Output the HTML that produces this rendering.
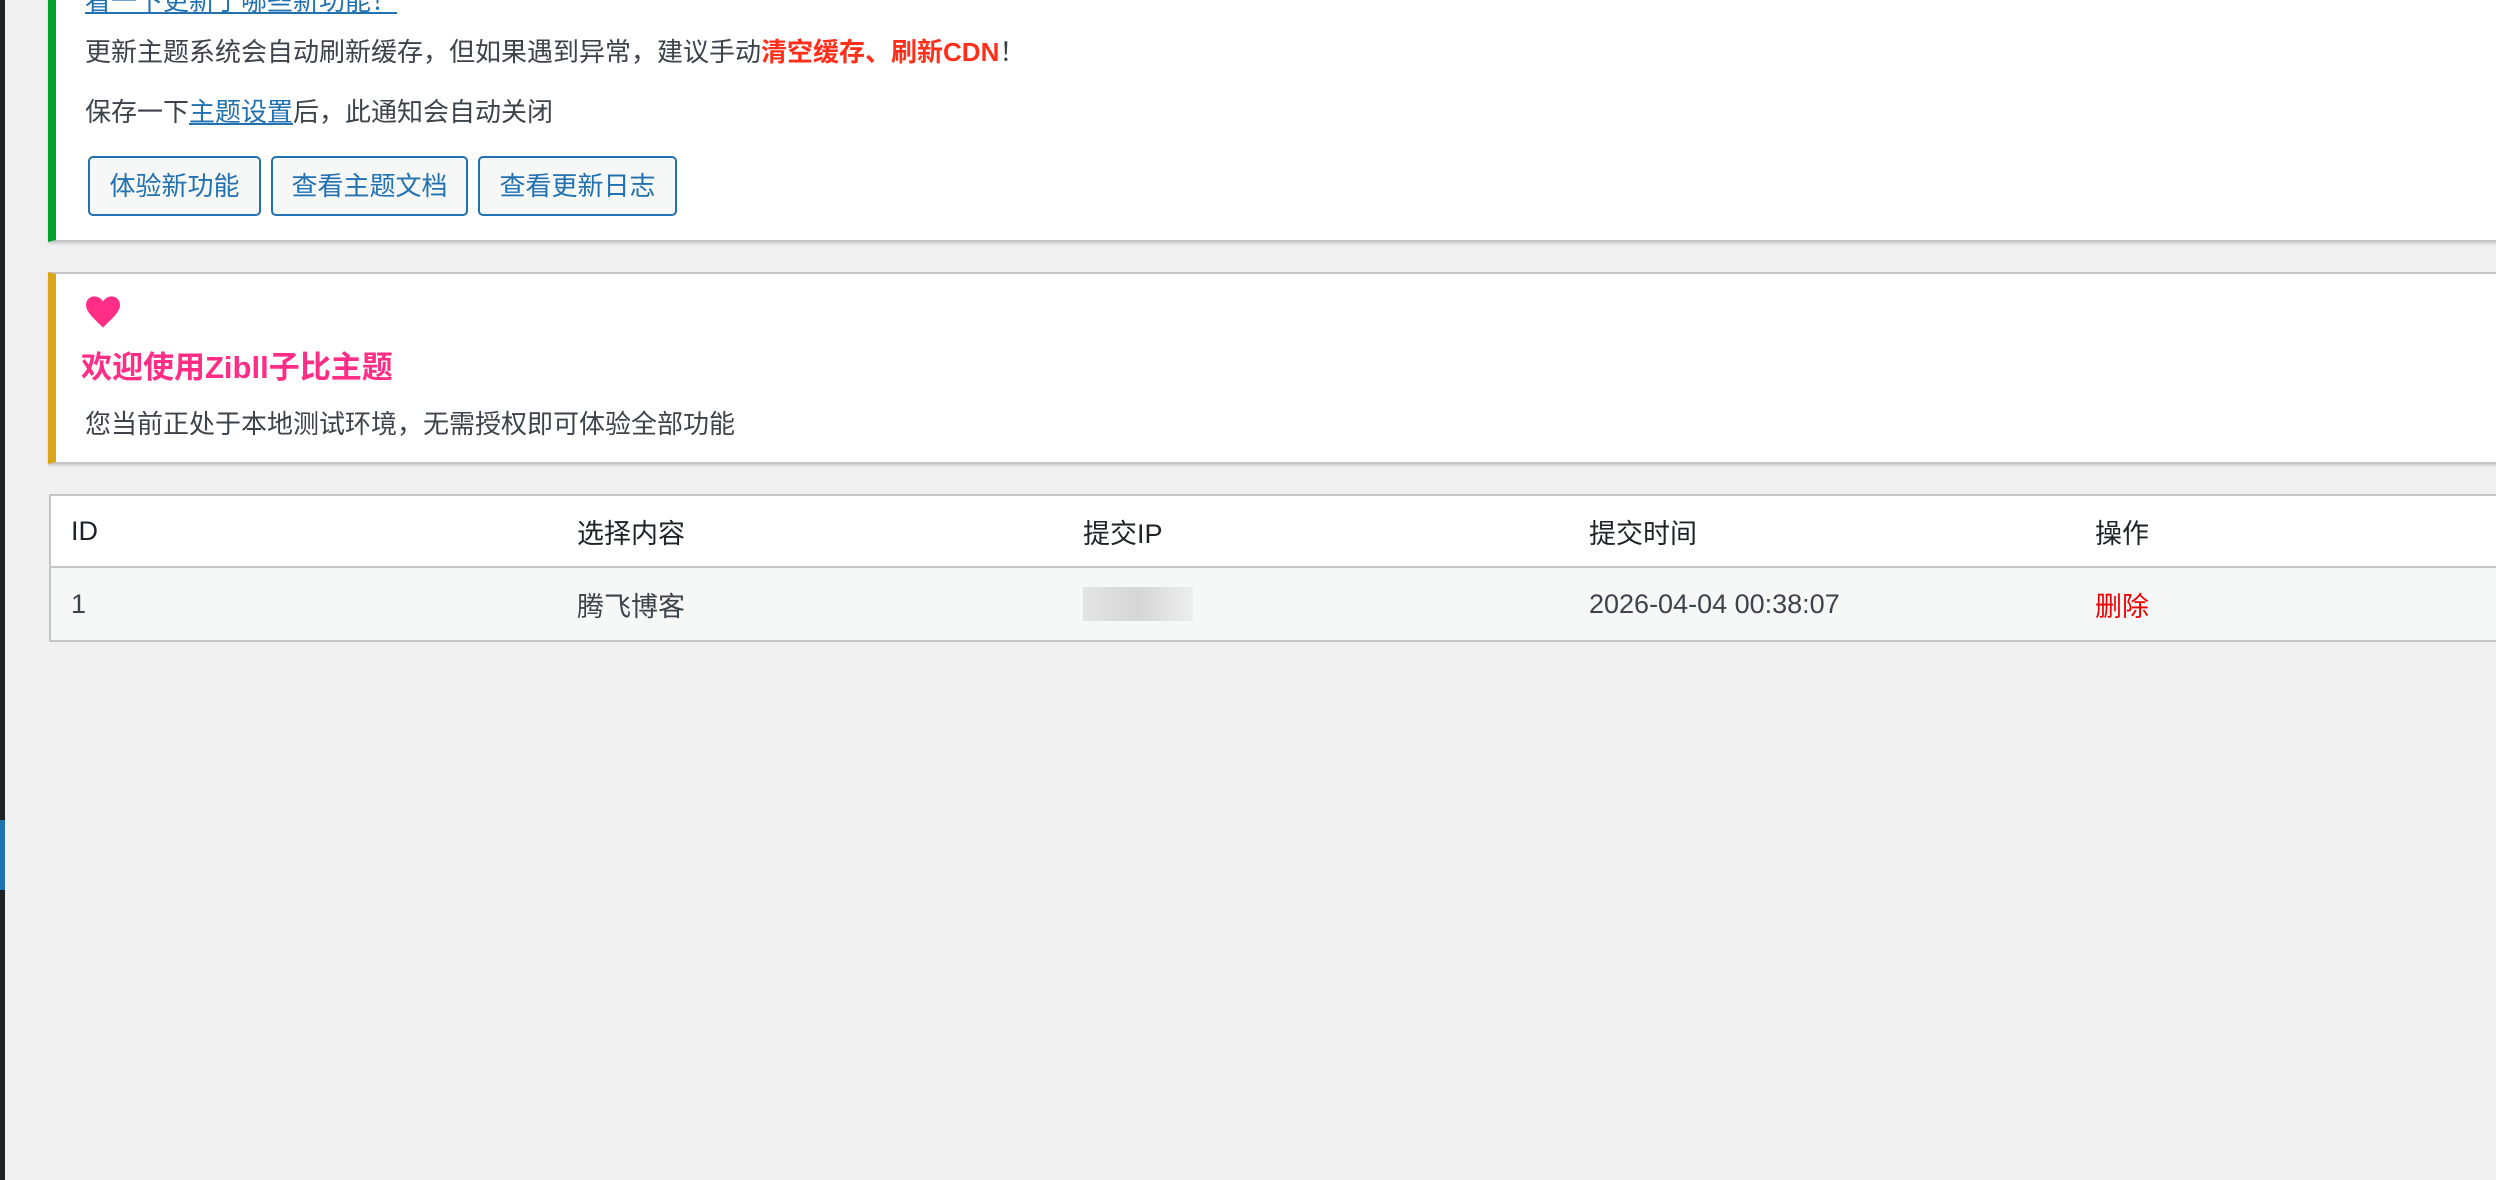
<!DOCTYPE html>
<html><head><meta charset="utf-8"><style>
body{margin:0;width:2496px;height:1180px;background:#f0f0f1;font-family:"Liberation Sans","Noto Sans CJK SC",sans-serif;color:#3c434a;position:relative;overflow:hidden;font-size:26px}
.strip{position:absolute;left:0;top:0;width:5px;height:1180px;background:#1d2327}
.strip2{position:absolute;left:0;top:820px;width:5px;height:70px;background:#2271b1}
.n{position:absolute;left:48px;right:0;background:#fff;box-shadow:0 2px 2px rgba(0,0,0,.12);border-left:8px solid}
.n1{top:-10px;height:250px;border-left-color:#00a32a;border-bottom:2px solid #c3c4c7}
.n2{top:272px;height:188px;border-left-color:#dba617;border-top:2px solid #c3c4c7;border-bottom:2px solid #c3c4c7}
.t{position:absolute;white-space:nowrap;line-height:1}
a{color:#2271b1;text-decoration:underline}
.btn{position:absolute;height:56px;border:2px solid #2271b1;border-radius:5px;background:#f6f7f7;color:#2271b1;font-size:26px;line-height:56px;text-align:center;box-sizing:content-box}
table{position:absolute;left:49px;top:494px;width:2460px;border-collapse:collapse;border:2px solid #c3c4c7;background:#fff;table-layout:fixed}
td{width:486px;padding:0 0 0 20px;height:70px;font-size:27px;color:#3c434a;text-align:left;vertical-align:middle}
tr.h td{height:70px;border-bottom:2px solid #c3c4c7;color:#1d2327}
tr.r td{background:#f6f7f7;height:72px}
</style></head><body>
<div class="strip"></div><div class="strip2"></div>
<div class="n n1">
 <div class="t" style="left:29px;top:-2px;color:#2271b1;text-decoration:underline">看一下更新了哪些新功能！</div>
 <div class="t" style="left:29px;top:49px">更新主题系统会自动刷新缓存，但如果遇到异常，建议手动<b style="color:#ff2f1a">清空缓存、刷新CDN</b>！</div>
 <div class="t" style="left:29px;top:109px">保存一下<a>主题设置</a>后，此通知会自动关闭</div>
 <div class="btn" style="left:32px;width:169px;top:166px">体验新功能</div>
 <div class="btn" style="left:215px;width:193px;top:166px">查看主题文档</div>
 <div class="btn" style="left:422px;width:195px;top:166px">查看更新日志</div>
</div>
<div class="n n2">
 <svg style="position:absolute;left:30px;top:22px" width="34" height="32" viewBox="0 0 24 22"><path d="M12 22 C5 15 0 11 0 6 C0 2.5 2.7 0 6 0 C8.5 0 10.5 1.5 12 3.5 C13.5 1.5 15.5 0 18 0 C21.3 0 24 2.5 24 6 C24 11 19 15 12 22Z" fill="#ff2d85"/></svg>
 <div class="t" style="left:25px;top:78px;color:#ff2d85;font-weight:bold;font-size:31px">欢迎使用Zibll子比主题</div>
 <div class="t" style="left:29px;top:137px">您当前正处于本地测试环境，无需授权即可体验全部功能</div>
</div>
<table>
<tr class="h"><td>ID</td><td>选择内容</td><td>提交IP</td><td>提交时间</td><td>操作</td></tr>
<tr class="r"><td>1</td><td>腾飞博客</td><td><span style="display:inline-block;width:110px;height:34px;background:linear-gradient(90deg,#e4e4e4,#d6d6d6,#eee);vertical-align:middle"></span></td><td>2026-04-04 00:38:07</td><td style="color:#e00">删除</td></tr>
</table>
</body></html>
